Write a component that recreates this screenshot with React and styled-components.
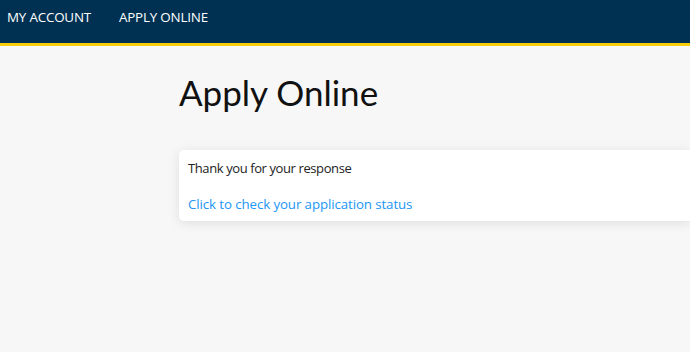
import styled, { createGlobalStyle } from 'styled-components';

const GlobalStyle = createGlobalStyle`
body{
    margin: 0;
    background: #f7f7f7;
    font-family: "Open Sans", "Liberation Sans", sans-serif;
    overflow: hidden;
}
`;

const navItems = ["MY ACCOUNT", "APPLY ONLINE"];

const App = () => {
    return (
        <Page>
            <GlobalStyle />
            <Header>
                <nav>
                    {navItems.map((item) => (
                        <NavLink key={item}>{item}</NavLink>
                    ))}
                </nav>
            </Header>
            <Main>
                <Title>Apply Online</Title>
                <Card>
                    <p>Thank you for your response</p>
                    <StatusLink href="#">Click to check your application status</StatusLink>
                </Card>
            </Main>
        </Page>
    );
}

const Page = styled.div`
min-height: 352px;
background-color: #f7f7f7;
`;

const Header = styled.header`
height: 43px;
background-color: #003152;
border-bottom: 3px solid #f7ce0b;
nav{
    display: flex;
    gap: 28px;
    padding: 8px 0 0 7px;
}
`;

const NavLink = styled.a`
color: #ffffff;
font-size: 13.4px;
line-height: 19px;
letter-spacing: -0.2px;
cursor: pointer;
`;

const Main = styled.main`
padding-left: 179px;
padding-top: 25px;
`;

const Title = styled.h1`
margin: 0;
font-family: Lato, "Open Sans", sans-serif;
font-weight: 400;
font-size: 35px;
line-height: 42px;
color: #111111;
`;

const Card = styled.div`
margin-top: 37px;
background-color: #ffffff;
border-radius: 5px 0 0 5px;
box-shadow: 0 2px 12px rgba(0, 0, 0, 0.1);
padding: 9px 9px 9px;
height: 53px;
p{
    margin: 0;
    font-size: 13px;
    line-height: 19px;
    letter-spacing: -0.4px;
    color: #222222;
}
`;

const StatusLink = styled.a`
display: block;
margin-top: 16px;
font-size: 13.3px;
line-height: 20px;
letter-spacing: -0.1px;
color: #2196f3;
text-decoration: none;
`;

export default App;
